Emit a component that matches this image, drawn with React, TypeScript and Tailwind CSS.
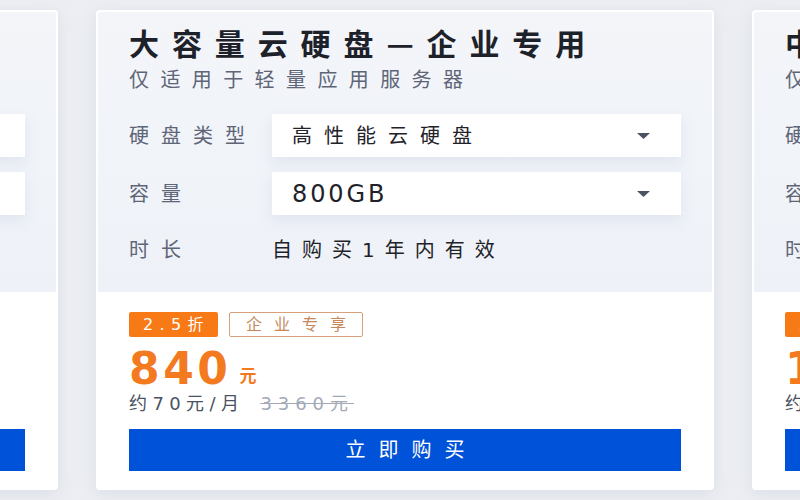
const font = { fontFamily: '"DejaVu Sans", "Noto Sans CJK SC", sans-serif' };
const cjk = { fontFamily: '"Noto Sans CJK SC", "Noto Sans", sans-serif' };

type Plan = {
  title: string;
  sub: string;
  disk: string;
  size: string;
  term: string;
  off: string;
  tag: string;
  price: string;
  month: string;
  origin: string;
};

const plans: Plan[] = [
  {
    title: "小容量云硬盘—个人专用",
    sub: "仅适用于轻量应用服务器",
    disk: "通用型云硬盘",
    size: "200GB",
    term: "自购买1年内有效",
    off: "3折",
    tag: "个人专享",
    price: "216",
    month: "约18元/月",
    origin: "720元",
  },
  {
    title: "大容量云硬盘—企业专用",
    sub: "仅适用于轻量应用服务器",
    disk: "高性能云硬盘",
    size: "800GB",
    term: "自购买1年内有效",
    off: "2.5折",
    tag: "企业专享",
    price: "840",
    month: "约70元/月",
    origin: "3360元",
  },
  {
    title: "中容量云硬盘—团队专用",
    sub: "仅适用于轻量应用服务器",
    disk: "高性能云硬盘",
    size: "400GB",
    term: "自购买1年内有效",
    off: "2.5折",
    tag: "团队专享",
    price: "1260",
    month: "约105元/月",
    origin: "5040元",
  },
];

function Caret() {
  return (
    <svg width="13" height="6" viewBox="0 0 13 6" className="mr-[31px] shrink-0">
      <path d="M0 0h13L6.5 6z" fill="#4a5263" />
    </svg>
  );
}

function Select({ value, latin }: { value: string; latin?: boolean }) {
  return (
    <div className="flex h-[43px] flex-1 items-center justify-between bg-white pl-[20px] shadow-[0_6px_12px_rgba(180,190,215,0.25)]">
      <span
        className={
          latin
            ? "text-[24px] tracking-[0.12em] text-[#1f2329]"
            : "text-[20px] tracking-[0.6em] text-[#1f2329]"
        }
      >
        {value}
      </span>
      <Caret />
    </div>
  );
}

function Card({ p }: { p: Plan }) {
  return (
    <div className="flex h-[480px] w-[618px] shrink-0 flex-col overflow-hidden rounded-[4px] border-2 border-white bg-white shadow-[0_4px_16px_rgba(170,180,200,0.25)]">
      <div className="flex h-[280px] flex-col bg-gradient-to-b from-[#f3f5f9] to-[#eef2f8] px-[31px] pt-[13px]">
        <h2
          className="whitespace-nowrap text-[30px] font-bold leading-[34px] tracking-[0.43em] text-[#1d2129]"
          style={cjk}
        >
          {p.title}
        </h2>
        <p className="mt-[8px] whitespace-nowrap text-[20px] leading-[26px] tracking-[0.57em] text-[#5d6577]">
          {p.sub}
        </p>
        <div className="mt-[21px] flex flex-col gap-[15px]">
          <div className="flex items-center">
            <span className="w-[143px] text-[20px] tracking-[0.6em] text-[#5d6577]">硬盘类型</span>
            <Select value={p.disk} />
          </div>
          <div className="flex items-center">
            <span className="w-[143px] text-[20px] tracking-[0.6em] text-[#5d6577]">容量</span>
            <Select value={p.size} latin />
          </div>
        </div>
        <div className="mt-[13px] flex h-[43px] items-center">
          <span className="w-[143px] text-[20px] tracking-[0.6em] text-[#5d6577]">时长</span>
          <span className="text-[20px] tracking-[0.5em] text-[#1f2329]">{p.term}</span>
        </div>
      </div>
      <div className="flex flex-1 flex-col bg-white px-[31px] pt-[20px]">
        <div className="flex gap-[11px]">
          <span className="flex h-[25px] w-[89px] items-center justify-center rounded-[2px] bg-[#f77a17] pl-[6px] text-[16px] tracking-[0.4em] text-white">
            {p.off}
          </span>
          <span className="flex h-[25px] w-[134px] items-center justify-center rounded-[2px] border border-[#d9a07c] pl-[12px] text-[16px] tracking-[0.75em] text-[#c7875b]">
            {p.tag}
          </span>
        </div>
        <div className="mt-[10px] flex h-[44px] items-end">
          <span className="text-[44px] font-bold leading-[44px] tracking-[0.08em] text-[#f37a1f]">{p.price}</span>
          <span className="mb-[4px] ml-[8px] text-[17px] font-bold text-[#f37a1f]" style={cjk}>
            元
          </span>
        </div>
        <div className="flex h-[24px] items-center gap-[16px] text-[18px]">
          <span className="tracking-[0.3em] text-[#4a5263]">{p.month}</span>
          <span className="tracking-[0.33em] text-[#a3a9b6] line-through">{p.origin}</span>
        </div>
        <button className="mt-[14px] flex h-[42px] items-center justify-center bg-[#0052d9] pl-[13px] text-[20px] tracking-[0.65em] text-white">
          立即购买
        </button>
      </div>
    </div>
  );
}

export default function App() {
  return (
    <div className="h-[500px] w-[800px] overflow-hidden bg-[#eceef3]" style={font}>
      <div className="ml-[-560px] flex gap-[38px] pt-[10px]">
        {plans.map((p) => (
          <Card key={p.title} p={p} />
        ))}
      </div>
    </div>
  );
}
